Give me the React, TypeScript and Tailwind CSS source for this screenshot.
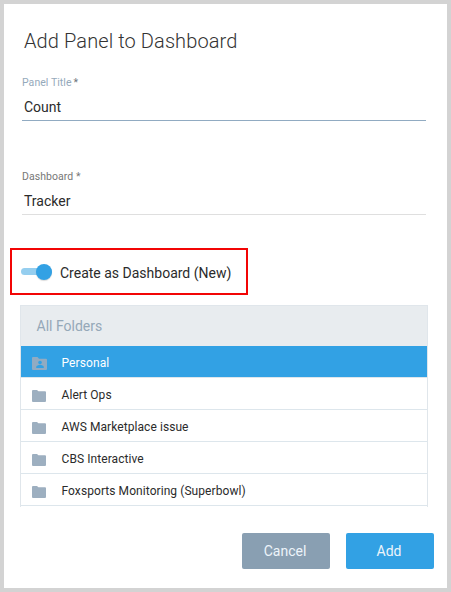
import React from "react";

const folders = [
  "Alert Ops",
  "AWS Marketplace issue",
  "CBS Interactive",
  "Foxsports Monitoring (Superbowl)",
];

function FolderIcon() {
  return (
    <svg className="mt-[5px] h-3 w-3.5 shrink-0" viewBox="0 0 14 12" fill="#9dafc0">
      <path d="M1 0h4l1.4 1.3H13a1 1 0 0 1 1 1V11a1 1 0 0 1-1 1H1a1 1 0 0 1-1-1V1a1 1 0 0 1 1-1z" />
    </svg>
  );
}

function SharedFolderIcon() {
  return (
    <svg className="mt-1 h-[13px] w-[15px] shrink-0" viewBox="0 0 15 13">
      <path
        fill="#91abc2"
        d="M1 0h4.5L7 1.8h7a1 1 0 0 1 1 1V12a1 1 0 0 1-1 1H1a1 1 0 0 1-1-1V1a1 1 0 0 1 1-1z"
      />
      <circle cx="8" cy="5.6" r="1.8" fill="#32a1e4" />
      <path fill="#32a1e4" d="M4.2 11V10c0-1.4 2.4-2 3.8-2s3.8.6 3.8 2v1z" />
    </svg>
  );
}

export default function App() {
  return (
    <div className="flex h-[592px] w-[451px] flex-col border-4 border-[#d3d3d3] bg-white font-['Roboto','Liberation_Sans',sans-serif] text-[#2b2b2b]">
      <h1 className="mt-[25px] ml-5 h-6 text-[20px] leading-6 font-light tracking-[0.1px] whitespace-nowrap text-[#333]">
        Add Panel to Dashboard
      </h1>

      <section className="mt-6 mr-[21px] ml-[18px] flex h-11 flex-col border-b border-[#91abc2]">
        <label className="h-3 text-[10.5px] leading-3 tracking-[0.05px] text-[#95a9bb]">
          Panel Title<span className="ml-0.5 text-[#6d747b]">*</span>
        </label>
        <div className="mt-2 pl-0.5 text-[14px] leading-5">Count</div>
      </section>

      <section className="mt-[50px] mr-[21px] ml-[18px] flex h-11 flex-col border-b border-[#dfdfdf]">
        <label className="h-3 text-[10.5px] leading-3 tracking-[0.05px] text-[#777]">
          Dashboard *
        </label>
        <div className="mt-2 pl-0.5 text-[14px] leading-5">Tracker</div>
      </section>

      <div className="mt-[33px] ml-1.5 flex h-[47px] w-[238px] items-center border-2 border-[#f20505] pl-[9px]">
        <span className="flex h-[7px] w-[31px] items-center justify-end rounded-full bg-[#95ceef]">
          <span className="size-4 shrink-0 rounded-full bg-[#32a1e4] shadow-[0_1px_1px_rgba(0,0,0,0.15)]" />
        </span>
        <span className="mt-0.5 ml-2 text-[14px] leading-5 whitespace-nowrap">
          Create as Dashboard (New)
        </span>
      </div>

      <div className="mt-2.5 ml-4 flex h-[202px] w-[408px] flex-col border-x border-t border-[#e0e6eb]">
        <div className="flex h-10 items-center bg-[#e8ecef] pl-[15.5px] text-[14px] leading-5 text-[#95a8b8]">
          All Folders
        </div>
        <div className="flex h-8 items-center border-b border-[#dde6ec] bg-[#32a1e4] pl-[11px] text-[12px] text-white">
          <SharedFolderIcon />
          <span className="mt-0.5 ml-[14.5px] tracking-[0.1px]">Personal</span>
        </div>
        {folders.map((name) => (
          <div
            key={name}
            className="flex h-8 items-center border-b border-[#dde6ec] bg-white pl-[11px] text-[12px]"
          >
            <FolderIcon />
            <span className="mt-0.5 ml-[15.5px] tracking-[0.07px] whitespace-nowrap">{name}</span>
          </div>
        ))}
      </div>

      <div className="mt-[26px] mr-[13px] flex justify-end gap-4 text-[14px] text-[#edf4fa]">
        <button className="h-9 w-[88px] rounded-[2px] bg-[#899fb2] pr-0.5">Cancel</button>
        <button className="h-9 w-[88px] rounded-[2px] bg-[#32a1e4] pr-0.5">Add</button>
      </div>
    </div>
  );
}
